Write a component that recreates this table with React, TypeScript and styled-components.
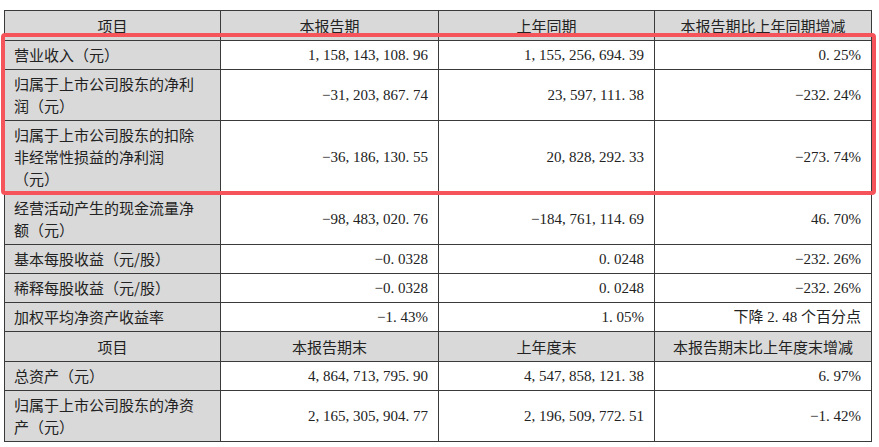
import React from "react";
import styled, { createGlobalStyle } from "styled-components";

const Global = createGlobalStyle`
  html, body { margin: 0; padding: 0; background: #ffffff; }
  body { font-family: "Liberation Serif", "Noto Sans CJK SC", serif; color: #1f1f1f; }
`;

const Page = styled.div`
  padding: 10px 0 0 4px;
`;

const Wrap = styled.div`
  position: relative;
  width: 867px;
`;

const Table = styled.table`
  border-collapse: collapse;
  table-layout: fixed;
  width: 867px;
  font-size: 15px;
  line-height: 22px;
  border: 1px solid #3a3a3a;
  text-spacing-trim: space-all;
`;

const Col = styled.col<{ $w: number }>`
  width: ${(p) => p.$w}px;
`;

const HeadCell = styled.td`
  background: #d9d9d9;
  border: 1px solid #3a3a3a;
  text-align: center;
  padding: 4px 6px 3px 6px;
  font-family: "Noto Sans CJK SC", sans-serif;
  font-weight: 400;
  color: #222;
`;

const LabelCell = styled.td`
  background: #d9d9d9;
  border: 1px solid #3a3a3a;
  text-align: left;
  padding: 3px 18px 3px 9px;
  font-family: "Noto Sans CJK SC", sans-serif;
  color: #222;
  vertical-align: middle;
  text-spacing-trim: space-all;
`;

const NumCell = styled.td`
  background: #ffffff;
  border: 1px solid #3a3a3a;
  text-align: right;
  padding: 3px 10px 3px 6px;
  font-family: "Liberation Serif", "Noto Sans CJK SC", serif;
  color: #222;
  vertical-align: middle;
  white-space: nowrap;
`;

const Highlight = styled.div`
  position: absolute;
  left: -3px;
  top: 23px;
  width: 875px;
  height: 162px;
  box-sizing: border-box;
  border: 4px solid #f4545a;
  border-radius: 4px;
  pointer-events: none;
`;

type Row = { kind: "head" | "data"; cells: string[] };

const widths = [216, 218, 216, 217];

const rows: Row[] = [
  { kind: "head", cells: ["项目", "本报告期", "上年同期", "本报告期比上年同期增减"] },
  { kind: "data", cells: ["营业收入（元）", "1, 158, 143, 108. 96", "1, 155, 256, 694. 39", "0. 25%"] },
  { kind: "data", cells: ["归属于上市公司股东的净利润（元）", "−31, 203, 867. 74", "23, 597, 111. 38", "−232. 24%"] },
  { kind: "data", cells: ["归属于上市公司股东的扣除非经常性损益的净利润（元）", "−36, 186, 130. 55", "20, 828, 292. 33", "−273. 74%"] },
  { kind: "data", cells: ["经营活动产生的现金流量净额（元）", "−98, 483, 020. 76", "−184, 761, 114. 69", "46. 70%"] },
  { kind: "data", cells: ["基本每股收益（元/股）", "−0. 0328", "0. 0248", "−232. 26%"] },
  { kind: "data", cells: ["稀释每股收益（元/股）", "−0. 0328", "0. 0248", "−232. 26%"] },
  { kind: "data", cells: ["加权平均净资产收益率", "−1. 43%", "1. 05%", "下降 2. 48 个百分点"] },
  { kind: "head", cells: ["项目", "本报告期末", "上年度末", "本报告期末比上年度末增减"] },
  { kind: "data", cells: ["总资产（元）", "4, 864, 713, 795. 90", "4, 547, 858, 121. 38", "6. 97%"] },
  { kind: "data", cells: ["归属于上市公司股东的净资产（元）", "2, 165, 305, 904. 77", "2, 196, 509, 772. 51", "−1. 42%"] },
];

export default function App() {
  return (
    <Page>
      <Global />
      <Wrap>
        <Table>
          <colgroup>
            {widths.map((w, i) => (
              <Col key={i} $w={w} />
            ))}
          </colgroup>
          <tbody>
            {rows.map((r, i) => (
              <tr key={i}>
                {r.kind === "head"
                  ? r.cells.map((c, j) => <HeadCell key={j}>{c}</HeadCell>)
                  : r.cells.map((c, j) =>
                      j === 0 ? <LabelCell key={j}>{c}</LabelCell> : <NumCell key={j}>{c}</NumCell>
                    )}
              </tr>
            ))}
          </tbody>
        </Table>
        <Highlight />
      </Wrap>
    </Page>
  );
}
